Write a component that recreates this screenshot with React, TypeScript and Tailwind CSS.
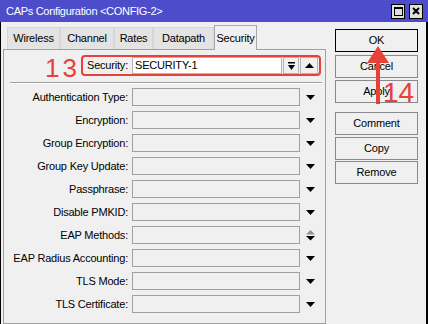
const font = "font-['Liberation_Sans',Arial,sans-serif]";

const tabs = [
  { name: "Wireless", w: "w-[53px]" },
  { name: "Channel", w: "w-[54px]" },
  { name: "Rates", w: "w-[39px]" },
  { name: "Datapath", w: "w-[61px]" },
];

const fields = [
  "Authentication Type:",
  "Encryption:",
  "Group Encryption:",
  "Group Key Update:",
  "Passphrase:",
  "Disable PMKID:",
  "EAP Methods:",
  "EAP Radius Accounting:",
  "TLS Mode:",
  "TLS Certificate:",
];

function DownArrow() {
  return (
    <svg width="9" height="5" viewBox="0 0 9 5">
      <path d="M0 0h9L4.5 5z" fill="#000" />
    </svg>
  );
}

function UpDownArrow() {
  return (
    <svg width="9" height="11" viewBox="0 0 9 11">
      <path d="M4.5 0L9 4.5H0z" fill="#8e948e" />
      <path d="M0 6h9L4.5 10.5z" fill="#000" />
    </svg>
  );
}

function SideButton({ label, primary }: { label: string; primary?: boolean }) {
  return (
    <button
      className={`h-[23px] w-[83px] bg-[#f0f0f0] text-[11px] tracking-[-0.2px] text-black ${
        primary ? "border border-black" : "border border-[#8a8a8a]"
      }`}
    >
      {label}
    </button>
  );
}

export default function App() {
  return (
    <div className={`relative h-[324px] w-[428px] overflow-hidden bg-[#f0f0f0] ${font}`}>
      {/* title bar */}
      <div className="flex h-[22px] items-center bg-[#4d4dcb] pl-[6px]">
        <span className="text-[11px] tracking-[-0.3px] text-white">CAPs Configuration &lt;CONFIG-2&gt;</span>
        <div className="ml-auto mr-[5px] flex gap-[4px]">
          <div className="flex h-[15px] w-[14px] items-center justify-center border border-black bg-[#e0e0e0]">
            <div className="h-[9px] w-[9px] border border-t-2 border-black" />
          </div>
          <div className="flex h-[15px] w-[14px] items-center justify-center border border-black bg-[#e0e0e0]">
            <svg width="8" height="8" viewBox="0 0 8 8">
              <path d="M1 1l6 6M7 1L1 7" stroke="#000" strokeWidth="2" />
            </svg>
          </div>
        </div>
      </div>

      <div className="flex h-[302px] border-l border-r-2 border-black">
        {/* left: tabs + panel */}
        <div className="flex w-[325px] flex-col pl-[2px] pt-[3px]">
          <div className="flex h-[24px] items-end pl-[4px] text-[11px] tracking-[-0.2px] text-black">
            {tabs.map((t) => (
              <div
                key={t.name}
                className={`flex h-[22px] ${t.w} items-center justify-center border border-b-0 border-[#d6d6d6] bg-[#e3e3e3]`}
              >
                {t.name}
              </div>
            ))}
            <div className="relative z-10 -mb-px flex h-[25px] w-[43px] items-center justify-center border border-b-0 border-[#a8a8a8] bg-[#f0f0f0]">
              Security
            </div>
          </div>

          <div className="flex-1 border border-[#a0a0a0] pt-[7px] text-[11px] tracking-[-0.2px] text-black">
            {/* Security row */}
            <div className="flex h-[17px] items-center">
              <div className="w-[124px] text-right">Security:</div>
              <div className="ml-[4px] flex h-[17px] w-[150px] items-center border border-[#b4b4b4] bg-white pl-[2px] text-[11px]">
                SECURITY-1
              </div>
              <div className="ml-[1px] flex h-[17px] w-[16px] items-center justify-center border border-[#b4b4b4] bg-[#f0f0f0]">
                <svg width="7" height="8" viewBox="0 0 7 8">
                  <path d="M0 0h7v1.5H0z" fill="#000" />
                  <path d="M0 3h7L3.5 8z" fill="#000" />
                </svg>
              </div>
              <div className="ml-[1px] flex h-[17px] w-[18px] items-center justify-center border border-[#b4b4b4] bg-[#f0f0f0]">
                <svg width="9" height="5" viewBox="0 0 9 5">
                  <path d="M4.5 0L9 5H0z" fill="#000" />
                </svg>
              </div>
            </div>

            <div className="ml-[6px] mr-[3px] mt-[8px] border-t border-b border-t-[#a0a0a0] border-b-white" />

            <div className="mt-[4px] flex flex-col gap-[5px]">
              {fields.map((f) => (
                <div key={f} className="flex h-[18px] items-center">
                  <div className="w-[124px] whitespace-nowrap text-right">{f}</div>
                  <div className="ml-[4px] h-[18px] w-[168px] border border-[#a0a0a0] bg-[#f0f0f0]" />
                  <div className="ml-[6px] flex w-[9px] items-center justify-center">
                    {f === "EAP Methods:" ? <UpDownArrow /> : <DownArrow />}
                  </div>
                </div>
              ))}
            </div>
          </div>
        </div>

        {/* right: buttons */}
        <div className="ml-[9px] flex flex-col pt-[7px]">
          <div className="flex flex-col gap-[2.5px]">
            <SideButton label="OK" primary />
            <SideButton label="Cancel" />
            <SideButton label="Apply" />
          </div>
          <div className="mt-[9px] flex flex-col gap-[1.5px]">
            <SideButton label="Comment" />
            <SideButton label="Copy" />
            <SideButton label="Remove" />
          </div>
        </div>
      </div>

      {/* annotations */}
      <div className="absolute left-[81px] top-[55px] h-[21px] w-[240px] rounded-[4px] border-2 border-[#e8413a]" />
      <div className="absolute left-[45px] top-[55px] text-[26px] leading-none tracking-[3px] text-[#e8413a]">13</div>
      <div className="absolute left-[383px] top-[79px] text-[28px] leading-none text-[#e8413a]">14</div>
      <svg className="absolute left-[366px] top-[46px]" width="24" height="59" viewBox="0 0 24 59">
        <path d="M12 0L23 17H1z" fill="#e8413a" />
        <rect x="10" y="16" width="4" height="42" fill="#e8413a" />
      </svg>
    </div>
  );
}
